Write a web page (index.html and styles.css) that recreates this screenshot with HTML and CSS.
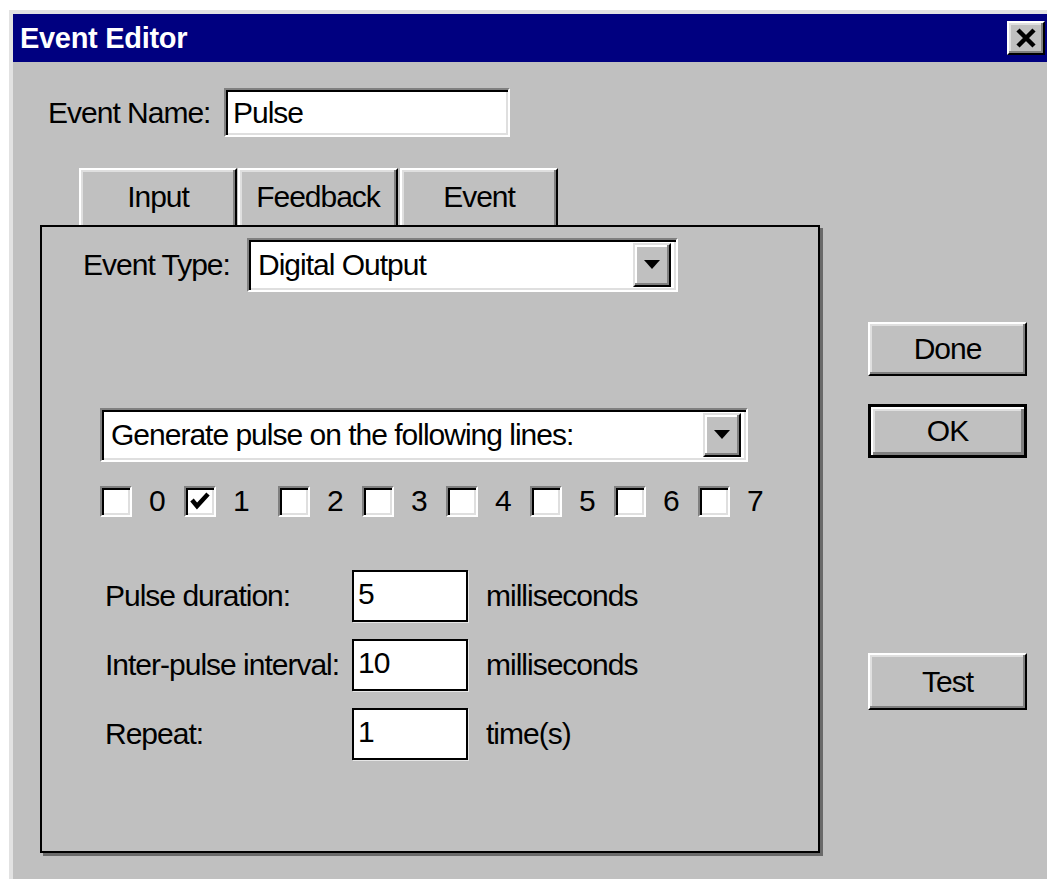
FILE: index.html
```html
<!DOCTYPE html>
<html lang="en">
<head>
<meta charset="utf-8">
<title>Event Editor</title>
<link rel="stylesheet" href="styles.css">
</head>
<body>
<div class="window">
  <div class="titlebar">
    <span class="title">Event Editor</span>
    <button class="close" aria-label="Close">
      <svg width="22" height="20" viewBox="0 0 22 20"><path d="M3 2 L19 18 M19 2 L3 18" stroke="#000" stroke-width="4.5" fill="none"/></svg>
    </button>
  </div>
  <div class="main">
    <div class="form">
      <div class="name-row">
        <span class="name-label">Event Name:</span>
        <div class="field name-field">Pulse</div>
      </div>
      <div class="tabs">
        <div class="tab tab-input">Input</div>
        <div class="tab tab-feedback">Feedback</div>
        <div class="tab tab-event">Event</div>
      </div>
      <div class="panel">
        <div class="type-row">
          <span class="type-label">Event Type:</span>
          <div class="combo type-combo">
            <span class="combo-text">Digital Output</span>
            <span class="drop"><svg width="16" height="9" viewBox="0 0 16 9"><path d="M0 0 H16 L8 9 Z" fill="#000"/></svg></span>
          </div>
        </div>
        <div class="combo lines-combo">
          <span class="combo-text">Generate pulse on the following lines:</span>
          <span class="drop"><svg width="16" height="9" viewBox="0 0 16 9"><path d="M0 0 H16 L8 9 Z" fill="#000"/></svg></span>
        </div>
        <div class="bits">
          <div class="bit"><span class="box"></span><span class="bit-num">0</span></div>
          <div class="bit"><span class="box"><svg width="22" height="20" viewBox="0 0 22 20"><path d="M3 9 L8 15 L19 3" stroke="#000" stroke-width="4.5" fill="none"/></svg></span><span class="bit-num">1</span></div>
          <div class="bit"><span class="box"></span><span class="bit-num">2</span></div>
          <div class="bit"><span class="box"></span><span class="bit-num">3</span></div>
          <div class="bit"><span class="box"></span><span class="bit-num">4</span></div>
          <div class="bit"><span class="box"></span><span class="bit-num">5</span></div>
          <div class="bit"><span class="box"></span><span class="bit-num">6</span></div>
          <div class="bit"><span class="box"></span><span class="bit-num">7</span></div>
        </div>
        <div class="params">
          <div class="param"><span class="param-label">Pulse duration:</span><div class="num-field">5</div><span class="unit">milliseconds</span></div>
          <div class="param"><span class="param-label">Inter-pulse interval:</span><div class="num-field">10</div><span class="unit">milliseconds</span></div>
          <div class="param"><span class="param-label">Repeat:</span><div class="num-field">1</div><span class="unit">time(s)</span></div>
        </div>
      </div>
    </div>
    <div class="actions">
      <button class="btn btn-done">Done</button>
      <button class="btn btn-ok">OK</button>
      <button class="btn btn-test">Test</button>
    </div>
  </div>
</div>
</body>
</html>
```

FILE: styles.css
```css
html, body {
  margin: 0;
  padding: 0;
  background: #ffffff;
  overflow: hidden;
}

body {
  width: 1047px;
  height: 879px;
  font-family: "Liberation Sans", Arial, sans-serif;
  font-size: 30px;
  letter-spacing: -1px;
  white-space: nowrap;
  color: #000;
}

/* dialog frame */
.window {
  margin: 10px 0 0 9px;
  width: 1050px;
  height: 869px;
  box-sizing: border-box;
  border-top: 4px solid #e2e2e2;
  border-left: 4px solid #e2e2e2;
  background: #c0c0c0;
}

.titlebar {
  height: 48px;
  background: #000080;
  display: flex;
  align-items: center;
  justify-content: space-between;
  padding-left: 7px;
  padding-right: 14px;
}

.title {
  font-weight: bold;
  font-size: 29px;
  color: #fff;
  letter-spacing: -0.3px;
}

.close {
  width: 38px;
  height: 34px;
  padding: 0;
  margin: 0;
  display: flex;
  align-items: center;
  justify-content: center;
  background: #c0c0c0;
  border: 2px solid;
  border-color: #fff #000 #000 #fff;
  box-shadow: inset -2px -2px #808080, inset 2px 2px #dfdfdf;
}

.main {
  display: grid;
  grid-template-columns: 855px 159px;
}

/* left side */
.name-row {
  display: flex;
  align-items: center;
  margin-top: 26px;
  padding-left: 35px;
}

.name-label {
  width: 176px;
}

.field {
  background: #fff;
  box-sizing: border-box;
  border: 2px solid;
  border-color: #808080 #fff #fff #808080;
  box-shadow: inset 2px 2px #000, inset -2px -2px #dfdfdf;
  display: flex;
  align-items: center;
}

.name-field {
  width: 286px;
  height: 49px;
  padding-left: 7px;
}

.tabs {
  display: flex;
  margin-top: 31px;
  margin-left: 66px;
  gap: 1px;
}

.tab {
  height: 57px;
  box-sizing: border-box;
  display: flex;
  align-items: center;
  justify-content: center;
  border-style: solid;
  border-width: 2px 2px 0 2px;
  border-color: #fff #000 #000 #fff;
  box-shadow: inset -2px 0 #808080, inset 2px 2px #dfdfdf;
  padding-bottom: 2px;
}

.tab-input { width: 158px; }
.tab-feedback { width: 160px; }
.tab-event { width: 158px; margin-left: 1px; }

.panel {
  margin-left: 27px;
  width: 780px;
  height: 628px;
  box-sizing: border-box;
  border: 2px solid #000;
  box-shadow: 3px 3px 0 #6a6a6a;
}

.type-row {
  display: flex;
  align-items: center;
  margin-top: 11px;
  padding-left: 41px;
}

.type-label {
  width: 164px;
}

.combo {
  background: #fff;
  box-sizing: border-box;
  border: 2px solid;
  border-color: #808080 #fff #fff #808080;
  box-shadow: inset 2px 2px #000, inset -2px -2px #dfdfdf;
  display: flex;
  align-items: center;
  justify-content: space-between;
  padding: 3px 5px 4px 9px;
}

.type-combo {
  width: 431px;
  height: 54px;
}

.lines-combo {
  width: 648px;
  height: 54px;
  margin-top: 116px;
  margin-left: 58px;
}

.drop {
  width: 38px;
  height: 44px;
  box-sizing: border-box;
  background: #c0c0c0;
  border: 2px solid;
  border-color: #dfdfdf #000 #000 #dfdfdf;
  box-shadow: inset -2px -2px #808080, inset 2px 2px #fff;
  display: flex;
  align-items: center;
  justify-content: center;
}

/* output line checkboxes */
.bits {
  display: grid;
  grid-template-columns: 84px 94px repeat(6, 84px);
  margin-top: 22px;
  margin-left: 58px;
  height: 31px;
}

.bit {
  display: flex;
  align-items: center;
}

.box {
  width: 32px;
  height: 31px;
  box-sizing: border-box;
  background: #fff;
  border: 2px solid;
  border-color: #808080 #fff #fff #808080;
  box-shadow: inset 2px 2px #000, inset -2px -2px #dfdfdf;
  display: flex;
  align-items: center;
  justify-content: center;
}

.bit-num {
  margin-left: 17px;
}

/* timing parameters */
.params {
  display: flex;
  flex-direction: column;
  gap: 17px;
  margin-top: 55px;
  margin-left: 63px;
}

.param {
  display: flex;
  align-items: center;
  height: 52px;
}

.param-label {
  width: 247px;
}

.num-field {
  width: 116px;
  height: 52px;
  box-sizing: border-box;
  background: #fff;
  border: 2px solid #000;
  box-shadow: 1px 1px 0 #e6e6e6;
  padding-left: 4px;
  display: flex;
  align-items: center;
  padding-bottom: 4px;
}

.unit {
  margin-left: 18px;
}

/* right side buttons */
.actions {
  display: flex;
  flex-direction: column;
}

.btn {
  width: 159px;
  height: 54px;
  margin: 0;
  padding: 0;
  font: inherit;
  letter-spacing: inherit;
  color: #000;
  background: #c0c0c0;
  box-sizing: border-box;
  border: 2px solid;
  border-color: #fff #000 #000 #fff;
  box-shadow: inset -2px -2px #808080, inset 2px 2px #dfdfdf;
}

.btn-done { margin-top: 260px; }

.btn-ok {
  margin-top: 28px;
  border: 3px solid #000;
  box-shadow: inset 2px 2px #fff, inset -3px -3px #808080, inset 4px 4px #dfdfdf;
}

.btn-test {
  margin-top: 195px;
  height: 57px;
}
```
